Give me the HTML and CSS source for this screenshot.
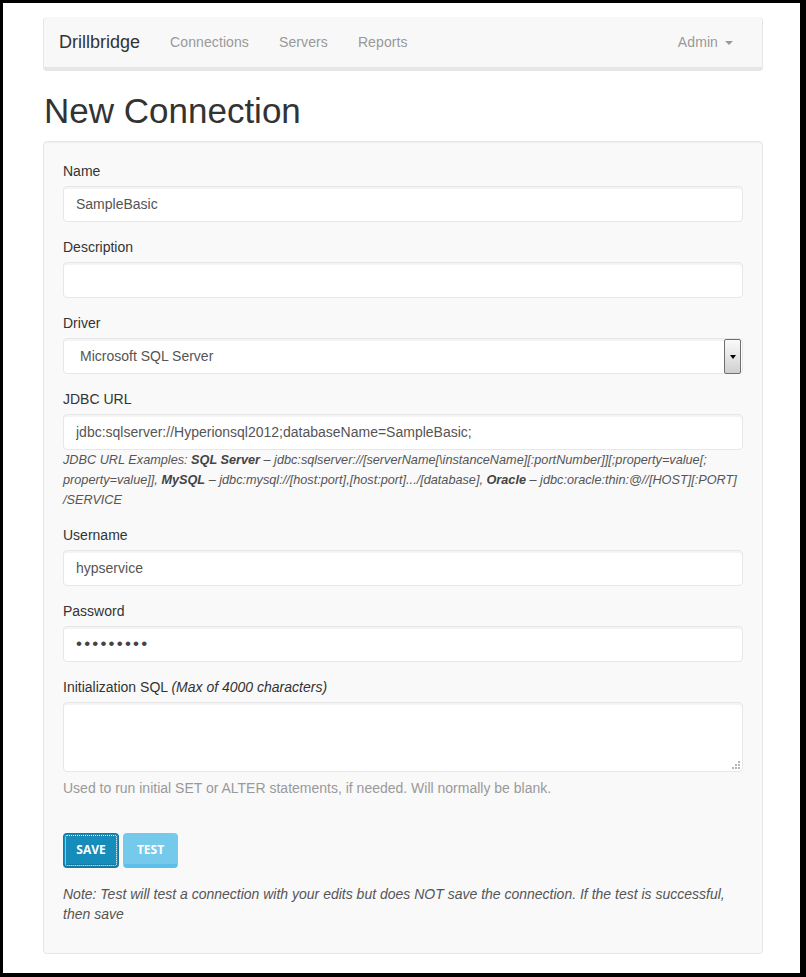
FILE: index.html
```html
<!DOCTYPE html>
<html lang="en">
<head>
<meta charset="utf-8">
<title>New Connection - Drillbridge</title>
<link rel="stylesheet" href="styles.css">
</head>
<body>
<div class="container">
  <nav class="navbar">
    <a class="brand" href="#">Drillbridge</a>
    <ul class="nav">
      <li><a href="#">Connections</a></li>
      <li><a href="#">Servers</a></li>
      <li><a href="#">Reports</a></li>
    </ul>
    <ul class="nav nav-right">
      <li><a href="#">Admin <span class="caret"></span></a></li>
    </ul>
  </nav>

  <h1 class="title">New Connection</h1>

  <form class="well">
    <div class="form-group">
      <label>Name</label>
      <input class="form-control" type="text" value="SampleBasic">
    </div>
    <div class="form-group">
      <label>Description</label>
      <input class="form-control" type="text" value="">
    </div>
    <div class="form-group">
      <label>Driver</label>
      <div class="select-wrap">
        <select class="form-control select">
          <option>Microsoft SQL Server</option>
        </select>
        <span class="select-btn"><span class="select-arrow"></span></span>
      </div>
    </div>
    <div class="form-group">
      <label>JDBC URL</label>
      <input class="form-control" type="text" value="jdbc:sqlserver://Hyperionsql2012;databaseName=SampleBasic;">
      <p class="help-jdbc">JDBC URL Examples: <b>SQL Server</b> – jdbc:sqlserver://[serverName[\instanceName][:portNumber]][;property=value[; property=value]], <b>MySQL</b> – jdbc:mysql://[host:port],[host:port].../[database], <b>Oracle</b> – jdbc:oracle:thin:@//[HOST][:PORT] /SERVICE</p>
    </div>
    <div class="form-group">
      <label>Username</label>
      <input class="form-control" type="text" value="hypservice">
    </div>
    <div class="form-group">
      <label>Password</label>
      <input class="form-control password" type="password" value="drillpass">
    </div>
    <div class="form-group">
      <label>Initialization SQL <i>(Max of 4000 characters)</i></label>
      <div class="textarea-wrap">
        <textarea class="form-control textarea"></textarea>
        <svg class="grip" width="9" height="9" viewBox="0 0 9 9">
          <rect x="7" y="1" width="2" height="2" fill="#b5b5b5"/>
          <rect x="4" y="4" width="2" height="2" fill="#b5b5b5"/>
          <rect x="7" y="4" width="2" height="2" fill="#b5b5b5"/>
          <rect x="1" y="7" width="2" height="2" fill="#b5b5b5"/>
          <rect x="4" y="7" width="2" height="2" fill="#b5b5b5"/>
          <rect x="7" y="7" width="2" height="2" fill="#b5b5b5"/>
        </svg>
      </div>
      <p class="help-block">Used to run initial SET or ALTER statements, if needed. Will normally be blank.</p>
    </div>
    <div class="buttons">
      <button type="button" class="btn btn-primary">Save</button>
      <button type="button" class="btn btn-info">Test</button>
    </div>
    <p class="note">Note: Test will test a connection with your edits but does NOT save the connection. If the test is successful, then save</p>
  </form>
</div>
</body>
</html>
```
FILE: styles.css
```css
html {
  background: #000;
  margin: 0;
  padding: 0;
}
body {
  margin: 3px 6px 4px 3px;
  height: 970px;
  overflow: hidden;
  background: #fff;
  font-family: "Liberation Sans", Arial, sans-serif;
  font-size: 14px;
  line-height: 20px;
  color: #333;
}
.container {
  width: 720px;
  margin-left: 40px;
  padding-top: 14px;
}

/* navbar */
.navbar {
  display: flex;
  align-items: center;
  height: 50px;
  background: #f8f8f8;
  border-style: solid;
  border-color: #e6e6e6;
  border-width: 0 1px 4px 1px;
  border-radius: 4px;
  padding-right: 14px;
}
.brand {
  padding: 0 15px;
  font-size: 18px;
  color: #333;
  text-decoration: none;
}
.nav {
  display: flex;
  list-style: none;
  margin: 0;
  padding: 0;
}
.nav a {
  display: block;
  padding: 0 15px;
  color: #999;
  text-decoration: none;
  font-size: 14px;
  letter-spacing: 0.1px;
}
.nav-right {
  margin-left: auto;
}
.caret {
  display: inline-block;
  width: 0;
  height: 0;
  margin-left: 3px;
  vertical-align: middle;
  border-top: 4px solid #999;
  border-left: 4px solid transparent;
  border-right: 4px solid transparent;
}

.title {
  margin: 20px 0 10px 1px;
  font-size: 35px;
  line-height: 40px;
  font-weight: normal;
  color: #333;
}

/* well */
.well {
  display: block;
  margin: 0;
  padding: 19px;
  background: #f9f9f9;
  border: 1px solid #e6e6e6;
  border-radius: 4px;
  box-shadow: inset 0 1px 1px rgba(0, 0, 0, 0.04);
}
.form-group {
  margin-bottom: 15px;
}
.form-group label {
  display: block;
  margin-bottom: 5px;
  line-height: 20px;
  color: #333;
}
.form-control {
  display: block;
  box-sizing: border-box;
  width: 100%;
  height: 36px;
  margin: 0;
  padding: 6px 12px;
  font-family: "Liberation Sans", Arial, sans-serif;
  font-size: 14px;
  color: #555;
  background: #fff;
  border: 1px solid #e7e7e7;
  border-radius: 4px;
  box-shadow: inset 0 2px 0 rgba(0, 0, 0, 0.045);
  outline: none;
}
.password {
  font-size: 17px;
  letter-spacing: 2.2px;
  color: #444;
}

.select-wrap {
  position: relative;
}
.select {
  appearance: none;
  -webkit-appearance: none;
  padding-left: 16px;
}
.select-btn {
  position: absolute;
  top: 1px;
  right: 2px;
  width: 15px;
  height: 33px;
  border: 1px solid #6f6f6f;
  border-radius: 2px;
  background: linear-gradient(#fafafa, #e6e6e6 50%, #cfcfcf);
  display: flex;
  align-items: center;
  justify-content: center;
  pointer-events: none;
}
.select-arrow {
  width: 0;
  height: 0;
  border-top: 4px solid #000;
  border-left: 3.5px solid transparent;
  border-right: 3.5px solid transparent;
}

.help-jdbc {
  margin: 0;
  font-size: 12.7px;
  line-height: 20px;
  font-style: italic;
  color: #555;
}
.help-jdbc b {
  font-weight: bold;
  color: #444;
}

.textarea-wrap {
  position: relative;
}
.textarea {
  height: 70px;
  resize: none;
}
.grip {
  position: absolute;
  right: 3px;
  bottom: 3px;
}
.help-block {
  margin: 6px 0 0;
  line-height: 20px;
  color: #999;
}

.buttons {
  display: flex;
  gap: 4px;
  margin-top: 35px;
}
.btn {
  box-sizing: border-box;
  height: 35px;
  padding: 0 12px;
  font-family: "Open Sans", "Liberation Sans", sans-serif;
  font-size: 12px;
  font-weight: bold;
  text-transform: uppercase;
  color: #fff;
  border-style: solid;
  border-width: 1px 1px 4px 1px;
  border-radius: 4px;
  cursor: pointer;
}
.btn-primary {
  width: 56px;
  background: #158cba;
  border-color: #127ba3;
  outline: 1px dotted #fff;
  outline-offset: -3px;
}
.btn-info {
  width: 55px;
  background: #75caeb;
  border-color: #75caeb #75caeb #5bc0e8;
}

.note {
  margin: 16px 0 10px;
  font-style: italic;
  line-height: 20px;
  color: #555;
}
```
